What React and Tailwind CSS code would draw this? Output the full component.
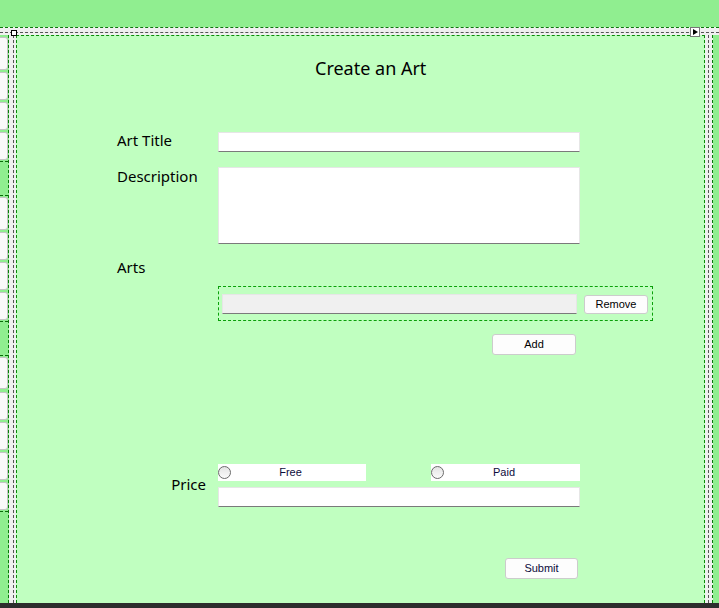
import React from 'react'

const STRIP = [
  { kind: 'box', h: 33, mt: 2 },
  { kind: 'box', h: 28, mt: 2 },
  { kind: 'box', h: 28, mt: 2 },
  { kind: 'box', h: 28, mt: 2 },
  { kind: 'group', h: 35, mt: 1 },
  { kind: 'box', h: 33, mt: 1 },
  { kind: 'box', h: 28, mt: 2 },
  { kind: 'box', h: 28, mt: 2 },
  { kind: 'box', h: 28, mt: 2 },
  { kind: 'group', h: 35, mt: 1 },
  { kind: 'box', h: 32, mt: 1 },
  { kind: 'box', h: 28, mt: 3 },
  { kind: 'box', h: 28, mt: 2 },
  { kind: 'box', h: 28, mt: 2 },
  { kind: 'box', h: 28, mt: 2 },
]

const ui = { fontFamily: '"Noto Sans", "Open Sans", sans-serif' }
const ms = { fontFamily: '"Liberation Sans", Arial, sans-serif' }

function TextBox({ className = '', gray = false }) {
  return (
    <div
      className={`border border-[#e6e6e6] border-b-[#7a7a7a] ${gray ? 'bg-[#f0f0f0]' : 'bg-white'} ${className}`}
    />
  )
}

function WinButton({ children, className = '', navy = false }) {
  return (
    <button
      style={ms}
      className={`flex items-center justify-center rounded-[3px] border border-[#cccccc] bg-[#fdfdfd] text-[11px] ${navy ? 'text-[#0c0c3c]' : 'text-black'} ${className}`}
    >
      {children}
    </button>
  )
}

function Radio({ label, className = '' }) {
  return (
    <div className={`flex h-[17px] items-center bg-white ${className}`}>
      <span className="h-[13px] w-[13px] rounded-full border border-[#6a6a6a] bg-gradient-to-b from-[#e4e4e4] to-[#fafafa]" />
      <span style={ms} className="flex-1 pr-[16px] text-center text-[11px] text-[#0c0c3c]">
        {label}
      </span>
    </div>
  )
}

export default function App() {
  return (
    <div className="relative flex h-[608px] w-[719px] flex-col overflow-hidden bg-[#90ee90]">
      {/* top green area */}
      <div className="h-[27px] shrink-0" />

      {/* designer top rail */}
      <div className="h-[8px] shrink-0 border-t border-dashed border-[#0a7a0a] bg-[#f0f0f0] pt-[4px]">
        <div className="border-t border-dashed border-[#555]" />
      </div>

      {/* body */}
      <div className="flex h-[568px] shrink-0">
        {/* left strip of collapsed items */}
        <div className="flex w-[9px] shrink-0 flex-col border-r border-dashed border-[#0a7a0a]">
          {STRIP.map((s, i) =>
            s.kind === 'box' ? (
              <div
                key={i}
                style={{ height: s.h, marginTop: s.mt }}
                className="w-[8px] shrink-0 rounded-r-[3px] border border-l-0 border-[#c4c4c4] bg-[#f9f9f9]"
              />
            ) : (
              <div
                key={i}
                style={{ height: s.h, marginTop: s.mt }}
                className="w-[8px] shrink-0 border-y border-dashed border-[#0a6a0a]"
              />
            )
          )}
          <div className="mt-[1px] flex-1 border-t border-dashed border-[#0a6a0a]" />
        </div>

        {/* left rail */}
        <div className="w-[7px] shrink-0 bg-[#f0f0f0] pl-[4px]">
          <div className="h-full border-l border-dashed border-[#555]" />
        </div>

        {/* form surface */}
        <div className="flex w-[689px] shrink-0 flex-col border-x border-t border-dashed border-[#0a8a0a] bg-[#c0ffc0]">
          <div style={ui} className="mt-[20px] h-[24px] pl-[298px] text-[18px] leading-[24px] text-black">
            Create an Art
          </div>

          <div className="mt-[52px] flex pl-[100px]">
            <div style={ui} className="-mt-[2px] w-[101px] text-[15px] leading-[20px] text-black">Art Title</div>
            <TextBox className="h-[20px] w-[362px]" />
          </div>

          <div className="mt-[15px] flex pl-[100px]">
            <div style={ui} className="-mt-[1px] w-[101px] text-[15px] leading-[20px] text-black">Description</div>
            <TextBox className="h-[77px] w-[362px]" />
          </div>

          <div style={ui} className="mt-[13px] h-[20px] pl-[100px] text-[15px] leading-[20px] text-black">
            Arts
          </div>

          <div className="mt-[9px] pl-[201px]">
            <div className="flex h-[35px] w-[435px] items-start border border-dashed border-[#0aa00a] pl-[3px] pt-[7px]">
              <TextBox gray className="h-[20px] w-[355px]" />
              <WinButton className="ml-[7px] mt-[1px] h-[19px] w-[64px]">Remove</WinButton>
            </div>
          </div>

          <div className="mt-[13px] pl-[475px]">
            <WinButton className="h-[21px] w-[84px]">Add</WinButton>
          </div>

          <div className="mt-[109px] flex">
            <div style={ui} className="w-[201px] pr-[12px] pt-[10px] text-right text-[15px] leading-[20px] text-black">
              Price
            </div>
            <div className="flex flex-col">
              <div className="flex w-[362px] justify-between">
                <Radio label="Free" className="w-[148px]" />
                <Radio label="Paid" className="w-[149px]" />
              </div>
              <TextBox className="mt-[6px] h-[20px] w-[362px]" />
            </div>
          </div>

          <div className="mt-[51px] pl-[488px]">
            <WinButton navy className="h-[21px] w-[73px]">Submit</WinButton>
          </div>
        </div>

        {/* right rail */}
        <div className="w-[8px] shrink-0 border-r border-dashed border-[#0a7a0a] bg-[#f0f0f0] pl-[3px]">
          <div className="h-full border-l border-dashed border-[#555]" />
        </div>
      </div>

      {/* bottom bar */}
      <div className="flex-1 bg-[#2d2d2d]" />

      {/* designer handles */}
      <div className="absolute left-[11px] top-[30px] h-[6px] w-[6px] border border-black bg-white" />
      <div className="absolute left-[690px] top-[27px] flex h-[10px] w-[10px] items-center justify-center border border-[#777] bg-white">
        <svg width="5" height="6" viewBox="0 0 5 6">
          <path d="M0 0 L5 3 L0 6 Z" fill="#000" />
        </svg>
      </div>
    </div>
  )
}
